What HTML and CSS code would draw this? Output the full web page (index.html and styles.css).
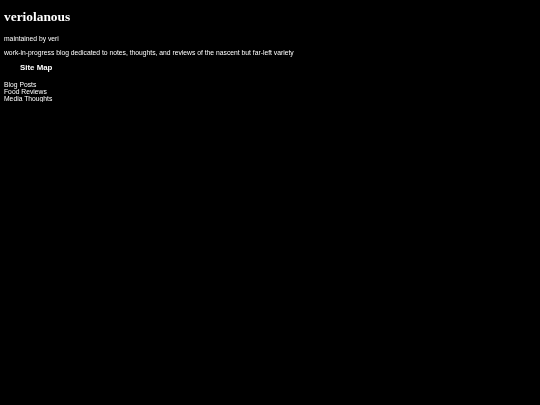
FILE: index.html
```html
<!DOCTYPE html>
<html>
<head>
<meta charset="utf-8">
<title>veriolanous</title>
<link rel="stylesheet" href="styles.css">
</head>
<body>
<h1 class="site-title">veriolanous</h1>
<p class="byline">maintained by veri</p>
<p class="tagline">work-in-progress blog dedicated to notes, thoughts, and reviews of the nascent but far-left variety</p>
<h3 class="sitemap-title">Site Map</h3>
<nav class="sitemap">
<a href="#">Blog Posts</a>
<a href="#">Food Reviews</a>
<a href="#">Media Thoughts</a>
</nav>
</body>
</html>
```
FILE: styles.css
```css
html {
  background: #000;
}
body {
  margin: 4px;
  background: #000;
  color: #fff;
  font-family: "Liberation Sans", Arial, sans-serif;
  font-size: 6.75px;
  -webkit-font-smoothing: antialiased;
  filter: grayscale(1);
}
.site-title {
  font-family: "Liberation Serif", "Times New Roman", serif;
  font-weight: bold;
  font-size: 13.4px;
  margin: 5px 0 10px;
}
.byline,
.tagline {
  margin: 6.75px 0;
}
.sitemap-title {
  font-size: 7.9px;
  font-weight: bold;
  margin: 7.6px 0 8.2px 16px;
}
.sitemap a {
  display: block;
  color: #fff;
  text-decoration: none;
}
```
